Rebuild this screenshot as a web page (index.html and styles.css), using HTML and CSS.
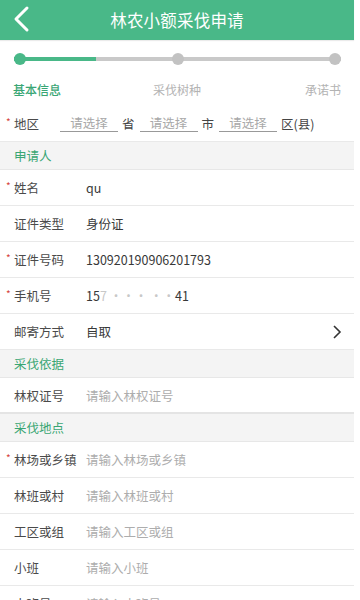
FILE: index.html
```html
<!DOCTYPE html>
<html lang="zh">
<head>
<meta charset="utf-8">
<title>林农小额采伐申请</title>
<link rel="stylesheet" href="styles.css">
</head>
<body>
<div class="page">
  <header class="topbar">
    <svg class="back" width="20" height="30" viewBox="0 0 20 30"><path d="M14 4 L3 15 L14 26" fill="none" stroke="#fff" stroke-width="3" stroke-linecap="round" stroke-linejoin="round"/></svg>
    <div class="title">林农小额采伐申请</div>
  </header>

  <section class="steps">
    <div class="track">
      <span class="dot on"></span>
      <span class="dot"></span>
      <span class="dot"></span>
    </div>
    <div class="step-labels">
      <span class="on">基本信息</span>
      <span class="mid">采伐树种</span>
      <span class="end">承诺书</span>
    </div>
  </section>

  <div class="row region">
    <span class="req">*</span>
    <span class="label short">地区</span>
    <span class="pick">请选择</span><span class="unit">省</span>
    <span class="pick">请选择</span><span class="unit">市</span>
    <span class="pick">请选择</span><span class="unit">区(县)</span>
  </div>

  <div class="section">申请人</div>
  <div class="row"><span class="req">*</span><span class="label">姓名</span><span class="value">qu</span></div>
  <div class="row"><span class="req"></span><span class="label">证件类型</span><span class="value">身份证</span></div>
  <div class="row"><span class="req">*</span><span class="label">证件号码</span><span class="value">130920190906201793</span></div>
  <div class="row"><span class="req">*</span><span class="label">手机号</span><span class="value">15<span class="blur">7 ··· ··</span>41</span></div>
  <div class="row"><span class="req"></span><span class="label">邮寄方式</span><span class="value">自取</span>
    <svg class="chev" width="12" height="16" viewBox="0 0 12 16"><path d="M3 2 L9 8 L3 14" fill="none" stroke="#333" stroke-width="1.6"/></svg>
  </div>

  <div class="section">采伐依据</div>
  <div class="row thick"><span class="req"></span><span class="label">林权证号</span><span class="ph">请输入林权证号</span></div>

  <div class="section">采伐地点</div>
  <div class="row"><span class="req">*</span><span class="label">林场或乡镇</span><span class="ph">请输入林场或乡镇</span></div>
  <div class="row"><span class="req"></span><span class="label">林班或村</span><span class="ph">请输入林班或村</span></div>
  <div class="row"><span class="req"></span><span class="label">工区或组</span><span class="ph">请输入工区或组</span></div>
  <div class="row"><span class="req"></span><span class="label">小班</span><span class="ph">请输入小班</span></div>
  <div class="row"><span class="req"></span><span class="label">大班号</span><span class="ph">请输入大班号</span></div>
</div>
</body>
</html>
```

FILE: styles.css
```css
* { box-sizing: border-box; }
html, body { margin: 0; padding: 0; background: #fff; }
body {
  font-family: "Noto Sans CJK SC", "Noto Sans", sans-serif;
  color: #333;
  overflow: hidden;
}
.page { width: 354px; background: #fff; }

.topbar {
  height: 40px;
  background: #49b888;
  display: flex;
  align-items: center;
  justify-content: center;
  position: relative;
  box-shadow: 0 1px 1px rgba(0,0,0,0.08);
}
.back { position: absolute; left: 13px; top: 4px; }
.title { color: #fff; font-size: 16.5px; letter-spacing: 0.2px; }

.steps { height: 66px; padding: 13px 13px 0 14px; }
.track {
  height: 12px;
  display: flex;
  justify-content: space-between;
  background:
    linear-gradient(to right, #49b888 0, #49b888 82px, #c9c9c9 82px, #c9c9c9 100%) center / 100% 4px no-repeat;
}
.dot { width: 12px; height: 12px; border-radius: 50%; background: #c2c2c2; }
.dot.on { background: #49b888; }
.step-labels {
  display: grid;
  grid-template-columns: 1fr auto 1fr;
  margin-top: 16px;
  margin-left: -1px;
  font-size: 12px;
  color: #b3b3b3;
  line-height: 18px;
}
.step-labels .on { color: #3aa675; font-weight: 500; justify-self: start; }
.step-labels .mid { justify-self: center; }
.step-labels .end { justify-self: end; }

.row {
  height: 36px;
  display: flex;
  align-items: center;
  padding-left: 6px;
  border-bottom: 1px solid #e9e9e9;
  font-size: 12.5px;
  position: relative;
}
.row.thick { border-bottom: 2px solid #e4e4e4; }
.req { width: 8px; color: #d6453d; font-size: 10px; align-self: center; margin-top: -4px; }
.label { width: 72px; color: #4a4a4a; }
.label.short { width: 46px; }
.value { color: #383838; }
.blur { color: #c8c8c8; letter-spacing: 0; }
.ph { color: #adadad; }
.chev { position: absolute; right: 11px; top: 10px; }

.region .pick {
  width: 58px;
  text-align: center;
  color: #a8a8a8;
  border-bottom: 1px solid #999;
  line-height: 16px;
}
.region .unit { color: #444; margin: 0 5px 0 4px; }

.section {
  height: 28px;
  background: #f4f4f4;
  border-bottom: 1px solid #e7e7e7;
  color: #39a673;
  font-size: 12.5px;
  display: flex;
  align-items: center;
  padding-left: 14px;
}
```
